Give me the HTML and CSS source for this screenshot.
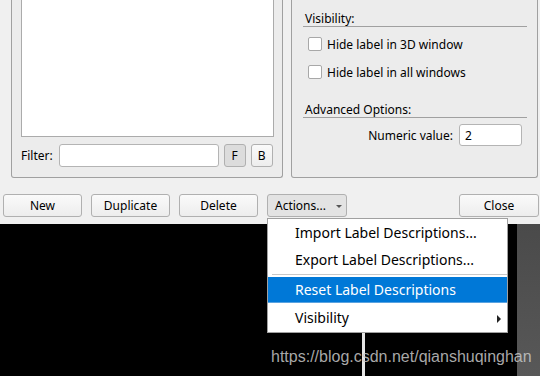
FILE: index.html
```html
<!DOCTYPE html>
<html lang="en">
<head>
  <meta charset="UTF-8" />
  <title>Label Descriptions</title>
  <link rel="stylesheet" href="styles.css">
</head>
<body>

  <div class="window">
    <div class="dialog">
      <div class="panels">
        <div class="group group-list">
          <div class="label-list"></div>
          <div class="filter-row">
            <span>Filter:</span>
            <input type="text" class="filter-input">
            <button class="small-btn pressed">F</button>
            <button class="small-btn">B</button>
          </div>
        </div>

        <div class="group group-options">
          <div class="section-title first">Visibility:</div>
          <label class="check-row"><span class="checkbox"></span>Hide label in 3D window</label>
          <label class="check-row second"><span class="checkbox"></span>Hide label in all windows</label>

          <div class="section-title advanced">Advanced Options:</div>
          <div class="numeric-row">
            <span>Numeric value:</span>
            <input type="text" class="numeric-input" value="2">
          </div>
        </div>
      </div>

      <div class="button-row">
        <button class="btn">New</button>
        <button class="btn">Duplicate</button>
        <button class="btn">Delete</button>
        <button class="btn actions">Actions... <span class="caret"></span></button>
        <button class="btn close">Close</button>
      </div>
    </div>

    <div class="viewport">
      <div class="side-strip"></div>
      <div class="slice-line"></div>
      <div class="watermark">https://blog.csdn.net/qianshuqinghan</div>
    </div>

    <!-- Actions dropdown -->
    <ul class="menu">
      <li class="first">Import Label Descriptions...</li>
      <li>Export Label Descriptions...</li>
      <li class="separator"></li>
      <li class="active">Reset Label Descriptions</li>
      <li class="submenu">Visibility <span class="arrow"></span></li>
    </ul>
  </div>

</body>
</html>
```

FILE: styles.css
```css
* {
  box-sizing: border-box;
}

body {
  margin: 0;
  background-color: #000;
  font-family: 'Noto Sans', 'Open Sans', sans-serif;
  font-size: 12px;
  color: #000;
}

.window {
  position: relative;
  width: 540px;
  height: 376px;
  overflow: hidden;
}

.dialog {
  background-color: #f0f0f0;
  height: 224px;
  padding-bottom: 7px;
}

.panels {
  display: flex;
  gap: 8px;
  padding: 0 2px 0 11px;
  height: 178px;
}

.group {
  border: 1px solid #a0a0a0;
  border-top: none;
  border-radius: 0 0 3px 3px;
  background-color: #ececec;
}

.group-list {
  width: 272px;
  padding: 0 8px 10px 9px;
  display: flex;
  flex-direction: column;
}

.label-list {
  height: 137px;
  background-color: #fff;
  border: 1px solid #ababab;
  border-top: none;
}

.filter-row {
  display: flex;
  align-items: center;
  gap: 5px;
  margin-top: 7px;
  height: 23px;
}

.filter-input {
  width: 160px;
  height: 23px;
  border: 1px solid #b4b4b4;
  border-radius: 3px;
  background-color: #fff;
  margin-left: 1px;
}

.small-btn {
  width: 22px;
  height: 23px;
  padding: 0;
  border: 1px solid #b0b0b0;
  border-radius: 3px;
  background: linear-gradient(#fafafa, #ededed);
  font-family: inherit;
  font-size: 12px;
  color: #000;
}

.small-btn.pressed {
  background: #dcdcdc;
}

.group-options {
  flex: 1;
  padding: 0 10px 0 11px;
}

.section-title {
  line-height: 15px;
  padding-left: 2px;
  border-bottom: 1px solid #a0a0a0;
}

.section-title.first {
  margin-top: 11px;
}

.section-title.advanced {
  margin-top: 23px;
}

.check-row {
  display: flex;
  align-items: center;
  gap: 5px;
  height: 14px;
  margin-top: 10px;
  padding-left: 5px;
}

.check-row.second {
  margin-top: 14px;
}

.checkbox {
  width: 14px;
  height: 14px;
  background-color: #fff;
  border: 1px solid #a8a8a8;
  border-radius: 2px;
}

.numeric-row {
  display: flex;
  align-items: center;
  justify-content: flex-end;
  gap: 6px;
  margin-top: 6px;
  padding-right: 5px;
}

.numeric-input {
  width: 63px;
  height: 22px;
  border: 1px solid #b4b4b4;
  border-radius: 3px;
  background-color: #fff;
  font-family: inherit;
  font-size: 12px;
  padding: 0 5px;
}

.button-row {
  display: flex;
  gap: 9px;
  margin-top: 16px;
  padding: 0 1px 0 3px;
}

.btn {
  width: 79px;
  height: 23px;
  padding: 0;
  border: 1px solid #b0b0b0;
  border-radius: 3px;
  background: linear-gradient(#fafafa, #ededed);
  font-family: inherit;
  font-size: 12px;
  color: #000;
}

.btn.actions {
  width: 80px;
  background: #e3e3e3;
  text-align: left;
  padding-left: 7px;
}

.caret {
  display: inline-block;
  margin-left: 7px;
  vertical-align: middle;
  border-left: 3px solid transparent;
  border-right: 3px solid transparent;
  border-top: 3px solid #555;
}

.btn.close {
  width: 80px;
  margin-left: auto;
}

.viewport {
  position: relative;
  height: 152px;
  background-color: #000;
}

.side-strip {
  position: absolute;
  left: 517px;
  top: 0;
  width: 23px;
  height: 152px;
  background: linear-gradient(#4a4a4a, #585858);
}

.slice-line {
  position: absolute;
  left: 362px;
  top: 0;
  width: 3px;
  height: 152px;
  background-color: #e6e6e6;
}

.watermark {
  position: absolute;
  left: 271px;
  top: 124px;
  font-family: 'Liberation Sans', Arial, sans-serif;
  font-size: 16px;
  color: rgba(200, 200, 200, 0.85);
}

.menu {
  position: absolute;
  left: 267px;
  top: 218px;
  width: 241px;
  margin: 0;
  padding: 0;
  list-style: none;
  background-color: #fff;
  border: 1px solid #a0a0a0;
  font-size: 14px;
}

.menu li {
  height: 28px;
  line-height: 28px;
  padding-left: 27px;
}

.menu li.first {
  height: 27px;
  line-height: 27px;
}

.menu li.separator {
  height: 1px;
  margin: 0 0 2px 4px;
  background-color: #c8c8c8;
}

.menu li.active {
  height: 26px;
  line-height: 26px;
  background-color: #0078d7;
  border-bottom: 1px solid #5aa3e0;
  color: #fff;
}

.menu li.submenu {
  position: relative;
  height: 29px;
  line-height: 30px;
}

.arrow {
  position: absolute;
  right: 6px;
  top: 12px;
  border-top: 4px solid transparent;
  border-bottom: 4px solid transparent;
  border-left: 4px solid #222;
}
```
